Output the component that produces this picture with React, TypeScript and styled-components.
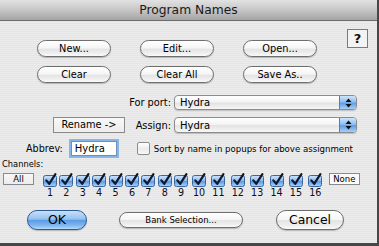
import React from "react";
import styled, { createGlobalStyle } from "styled-components";

const FONT = `"DejaVu Sans", "Liberation Sans", sans-serif`;

const GlobalStyle = createGlobalStyle`
  html, body {
    margin: 0;
    padding: 0;
    background: #e8e8e8;
  }
  body {
    font-family: ${FONT};
  }
`;

const Window = styled.div`
  width: 379px;
  height: 246px;
  box-sizing: border-box;
  border-right: 2px solid #474747;
  border-bottom: 3px solid #474747;
  display: flex;
  flex-direction: column;
  background: repeating-linear-gradient(180deg, #ececec 0 1px, #e5e5e5 1px 2px);
  font-family: ${FONT};
  color: #000;
  overflow: hidden;
`;

const TitleBar = styled.div`
  height: 20px;
  flex: none;
  border-bottom: 1px solid #6e6e6e;
  background: linear-gradient(#e2e2e2, #c6c6c6 50%, #a4a4a4);
  display: flex;
  align-items: center;
  justify-content: center;
  font-size: 12.3px;
  color: #1a1a1a;
`;

const TopSection = styled.div`
  display: flex;
  align-items: flex-start;
  height: 62px;
  padding: 0 9px 0 37px;
`;

const ButtonGrid = styled.div`
  display: grid;
  grid-template-columns: repeat(3, 74px);
  grid-auto-rows: 17px;
  column-gap: 29px;
  row-gap: 9px;
  margin-top: 19px;
`;

const PillButton = styled.button<{ $w: number; $h: number; $size: number; $primary?: boolean }>`
  width: ${p => p.$w}px;
  height: ${p => p.$h}px;
  padding: 0;
  border: 1px solid ${p => (p.$primary ? "#2d5b98" : "#6e6e6e")};
  border-radius: 999px;
  background: ${p =>
    p.$primary
      ? "linear-gradient(#c8e0f9 0%, #93c2f1 45%, #5c9de6 53%, #7fb6ee 80%, #b4dafc 100%)"
      : "linear-gradient(#ffffff 0%, #f5f5f5 48%, #e4e4e4 53%, #eeeeee 80%, #fafafa 100%)"};
  box-shadow: 0 1px 1px rgba(0, 0, 0, 0.22);
  font-family: ${FONT};
  font-size: ${p => p.$size}px;
  color: #000;
  line-height: 1;
`;

const HelpButton = styled.button`
  margin-left: auto;
  margin-top: 8px;
  width: 21px;
  height: 19px;
  padding: 0;
  border: 1px solid #7a7a7a;
  background: #f3f3f3;
  font-family: ${FONT};
  font-weight: bold;
  font-size: 13px;
  color: #111;
`;

const PortGrid = styled.div`
  display: grid;
  grid-template-columns: 125px 46px 186px;
  grid-template-rows: 15px 16px;
  row-gap: 7px;
  margin-top: 12px;
`;

const FieldLabel = styled.span`
  justify-self: end;
  align-self: center;
  font-size: 9.8px;
  white-space: nowrap;
`;

const RectButton = styled.button<{ $w: number; $h: number; $size: number; $white?: boolean }>`
  width: ${p => p.$w}px;
  height: ${p => p.$h}px;
  padding: 0;
  border: 1px solid #8a8a8a;
  background: ${p => (p.$white ? "#fbfbfb" : "linear-gradient(#f8f8f8, #ececec)")};
  font-family: ${FONT};
  font-size: ${p => p.$size}px;
  color: #000;
  line-height: 1;
  flex: none;
`;

const RenameButton = styled(RectButton)`
  justify-self: end;
`;

const Popup = styled.div`
  margin-left: 3px;
  width: 183px;
  box-sizing: border-box;
  display: flex;
  align-items: stretch;
  border: 1px solid #8c8c8c;
  border-radius: 4px;
  overflow: hidden;
  background: linear-gradient(#ffffff 0%, #f4f4f4 45%, #e3e3e3 55%, #f7f7f7 100%);
  box-shadow: 0 1px 1px rgba(0, 0, 0, 0.18);
`;

const PopupText = styled.span`
  flex: 1;
  padding-left: 5px;
  display: flex;
  align-items: center;
  font-size: 10px;
`;

const PopupArrow = styled.span`
  width: 16px;
  border-left: 1px solid #4f7fba;
  background: linear-gradient(#cfe4fb 0%, #8fc0f2 45%, #5d9ee7 55%, #a5d0fa 100%);
  display: flex;
  align-items: center;
  justify-content: center;
`;

const AbbrevRow = styled.div`
  display: flex;
  align-items: center;
  height: 19px;
  margin-top: 6px;
  padding-left: 26px;
`;

const AbbrevLabel = styled.span`
  font-size: 9.6px;
`;

const TextField = styled.div`
  width: 46px;
  height: 15px;
  box-sizing: border-box;
  margin-left: 8px;
  padding-left: 3px;
  border: 1px solid #6f8fb5;
  background: #fff;
  box-shadow: 0 0 0 2px #86b5ec;
  display: flex;
  align-items: center;
  font-size: 10px;
`;

const Check = styled.span`
  width: 13px;
  height: 13px;
  box-sizing: border-box;
  margin-left: 20px;
  border: 1px solid #8d8d8d;
  border-radius: 2px;
  background: linear-gradient(#ffffff, #ececec 55%, #f8f8f8);
  flex: none;
`;

const CheckText = styled.span`
  margin-left: 4px;
  font-size: 8.6px;
  white-space: nowrap;
`;

const ChannelsLabel = styled.div`
  margin-top: 1px;
  padding-left: 2px;
  font-size: 8.3px;
  line-height: 11px;
`;

const ChannelRow = styled.div`
  display: flex;
  align-items: flex-start;
  margin-top: 3px;
  padding-left: 3px;
`;

const BoxStrip = styled.div`
  display: flex;
  gap: 2.4px;
  margin-left: 9px;
  margin-right: 5px;
`;

const ChannelColumn = styled.div<{ $wide: boolean }>`
  width: ${p => (p.$wide ? 17 : 14)}px;
  display: flex;
  flex-direction: column;
  align-items: center;
`;

const ChannelNumber = styled.span`
  margin-top: 1px;
  font-size: 9.6px;
  line-height: 10px;
  color: #0c0c1c;
`;

const BottomRow = styled.div`
  display: flex;
  align-items: center;
  height: 20px;
  margin-top: 12px;
  padding-left: 27px;
  gap: 32px;
`;

const CancelButton = styled(PillButton)`
  margin-left: 1px;
`;

const CheckedBox = () => (
  <svg width="14" height="14" viewBox="0 0 14 14">
    <defs>
      <linearGradient id="cbg" x1="0" y1="0" x2="0" y2="1">
        <stop offset="0" stopColor="#d3e6fb" />
        <stop offset="0.45" stopColor="#8fbef0" />
        <stop offset="0.55" stopColor="#5d9de6" />
        <stop offset="1" stopColor="#acd4fb" />
      </linearGradient>
    </defs>
    <rect x="0.5" y="2.5" width="13" height="11" rx="2" fill="url(#cbg)" stroke="#3a669f" />
    <path d="M3.3 7.4 L6.2 10.8 L12.4 1.2" fill="none" stroke="#101830" strokeWidth="2.2" strokeLinecap="round" strokeLinejoin="round" />
  </svg>
);

const UpDown = () => (
  <svg width="7" height="10" viewBox="0 0 7 10">
    <path d="M3.5 0.5 L6.5 4 L0.5 4 Z" fill="#111" />
    <path d="M3.5 9.5 L6.5 6 L0.5 6 Z" fill="#111" />
  </svg>
);

const channels = Array.from({ length: 16 }, (_, i) => i + 1);

export default function App() {
  return (
    <>
      <GlobalStyle />
      <Window>
        <TitleBar>Program Names</TitleBar>
        <TopSection>
          <ButtonGrid>
            <PillButton $w={74} $h={17} $size={9.8}>New...</PillButton>
            <PillButton $w={74} $h={17} $size={9.8}>Edit...</PillButton>
            <PillButton $w={74} $h={17} $size={9.8}>Open...</PillButton>
            <PillButton $w={74} $h={17} $size={9.8}>Clear</PillButton>
            <PillButton $w={74} $h={17} $size={9.8}>Clear All</PillButton>
            <PillButton $w={74} $h={17} $size={9.8}>Save As..</PillButton>
          </ButtonGrid>
          <HelpButton>?</HelpButton>
        </TopSection>
        <PortGrid>
          <span />
          <FieldLabel>For port:</FieldLabel>
          <Popup>
            <PopupText>Hydra</PopupText>
            <PopupArrow><UpDown /></PopupArrow>
          </Popup>
          <RenameButton $w={72} $h={16} $size={9.8}>Rename -&gt;</RenameButton>
          <FieldLabel>Assign:</FieldLabel>
          <Popup>
            <PopupText>Hydra</PopupText>
            <PopupArrow><UpDown /></PopupArrow>
          </Popup>
        </PortGrid>
        <AbbrevRow>
          <AbbrevLabel>Abbrev:</AbbrevLabel>
          <TextField>Hydra</TextField>
          <Check />
          <CheckText>Sort by name in popups for above assignment</CheckText>
        </AbbrevRow>
        <ChannelsLabel>Channels:</ChannelsLabel>
        <ChannelRow>
          <RectButton $w={31} $h={12} $size={8.5}>All</RectButton>
          <BoxStrip>
            {channels.map(n => (
              <ChannelColumn key={n} $wide={n >= 10}>
                <CheckedBox />
                <ChannelNumber>{n}</ChannelNumber>
              </ChannelColumn>
            ))}
          </BoxStrip>
          <RectButton $w={31} $h={12} $size={8.5} $white>None</RectButton>
        </ChannelRow>
        <BottomRow>
          <PillButton $w={60} $h={20} $size={12.5} $primary>OK</PillButton>
          <PillButton $w={124} $h={16} $size={8.5}>Bank Selection...</PillButton>
          <CancelButton $w={68} $h={20} $size={12.4}>Cancel</CancelButton>
        </BottomRow>
      </Window>
    </>
  );
}
